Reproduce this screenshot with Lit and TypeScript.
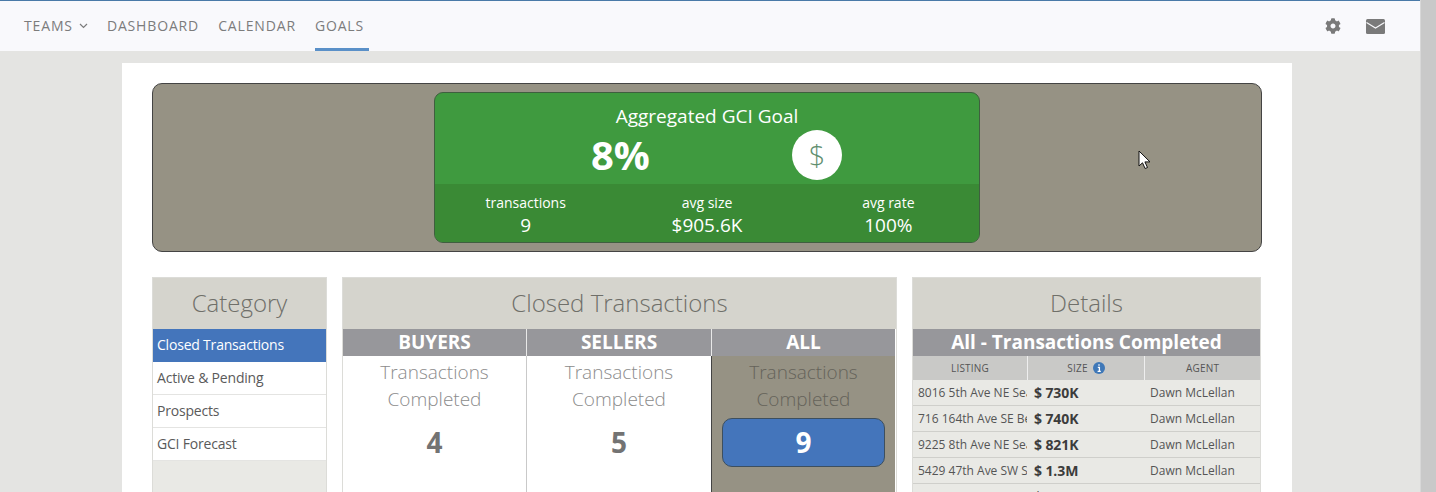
import { LitElement, html, css, svg } from "lit";
import { customElement } from "lit/decorators.js";

const rows = [
  ["8016 5th Ave NE Seattle", "$ 730K"],
  ["716 164th Ave SE Bellevue", "$ 740K"],
  ["9225 8th Ave NE Seattle", "$ 821K"],
  ["5429 47th Ave SW Seattle", "$ 1.3M"],
];

const gear = svg`<path d="M487.4 315.7l-42.6-24.6c4.3-23.2 4.3-47 0-70.2l42.6-24.6c4.9-2.8 7.1-8.6 5.5-14-11.1-35.6-30-67.8-54.7-94.6-3.8-4.1-10-5.1-14.8-2.3L380.8 110c-17.9-15.4-38.5-27.3-60.8-35.1V25.8c0-5.6-3.9-10.5-9.4-11.7-36.7-8.2-74.3-7.8-109.2 0-5.5 1.2-9.4 6.1-9.4 11.7V75c-22.2 7.9-42.8 19.8-60.8 35.1L88.7 85.5c-4.9-2.8-11-1.9-14.8 2.3-24.7 26.7-43.6 58.9-54.7 94.6-1.7 5.4.6 11.2 5.5 14L67.3 221c-4.3 23.2-4.3 47 0 70.2l-42.6 24.6c-4.9 2.8-7.1 8.6-5.5 14 11.1 35.6 30 67.8 54.7 94.6 3.8 4.1 10 5.1 14.8 2.3l42.6-24.6c17.9 15.4 38.5 27.3 60.8 35.1v49.2c0 5.6 3.9 10.5 9.4 11.7 36.7 8.2 74.3 7.8 109.2 0 5.5-1.2 9.4-6.1 9.4-11.7v-49.2c22.2-7.9 42.8-19.8 60.8-35.1l42.6 24.6c4.9 2.8 11 1.9 14.8-2.3 24.7-26.7 43.6-58.9 54.7-94.6 1.5-5.5-.7-11.3-5.6-14.1zM256 336c-44.1 0-80-35.9-80-80s35.9-80 80-80 80 35.9 80 80-35.9 80-80 80z"/>`;

@customElement("app-root")
export class AppRoot extends LitElement {
  static styles = css`
    :host { display: block; height: 492px; overflow: hidden; position: relative; font-family: "Open Sans", sans-serif; background: #e4e4e2; }
    .shell { display: flex; height: 492px; }
    .page { width: 1420px; flex: none; }
    .scrollbar { flex: 1; background: #c9c9c9; border-left: 1px solid #d8d8d8; }
    nav { height: 50px; border-top: 1px solid #4a7aa8; background: #f9f9fc; display: flex; padding-left: 24px; color: #7c7c7c; font-size: 14px; letter-spacing: 0.85px; }
    .item { display: flex; align-items: center; box-sizing: border-box; height: 50px; padding-top: 1px; margin-right: 19px; border-bottom: 3px solid transparent; white-space: nowrap; }
    .item.active { border-bottom-color: #5a90c8; padding-right: 5px; margin-right: 0; }
    .chev { margin-left: 6px; margin-top: 2px; }
    .nav-icons { margin-left: auto; display: flex; align-items: center; gap: 25px; padding-right: 35px; height: 50px; }
    .content { width: 1170px; height: 429px; margin: 12px 0 0 122px; background: #fff; padding: 20px 30px 0; box-sizing: border-box; }
    .hero { height: 169px; background: #969284; border: 1px solid #444; border-radius: 10px; box-sizing: border-box; display: flex; justify-content: center; padding-top: 8px; }
    .goal { width: 546px; height: 151px; box-sizing: border-box; background: #3f9a3f; border: 1px solid #3f5f3f; border-radius: 9px; color: #fff; overflow: hidden; display: flex; flex-direction: column; }
    .goal-title { font-size: 19px; line-height: 26px; text-align: center; margin-top: 10px; }
    .goal-main { display: flex; align-items: center; gap: 142px; padding-left: 156px; height: 54px; margin-top: -1px; }
    .pct { font-size: 40px; font-weight: 700; line-height: 50px; margin-top: -1px; }
    .coin { width: 50px; height: 50px; border-radius: 50%; background: #fff; color: #5f8f6f; font-size: 29px; font-weight: 300; line-height: 50px; text-align: center; }
    .stats { margin-top: 2px; height: 58px; background: #3a8a35; display: grid; grid-template-columns: repeat(3, 1fr); text-align: center; }
    .stat-l { font-size: 14px; line-height: 20px; margin-top: 9px; }
    .stat-v { font-size: 19px; line-height: 24px; margin-top: 0; }
    .cols { display: flex; gap: 15px; margin-top: 25px; align-items: stretch; height: 215px; }
    .col { box-sizing: border-box; border: 1px solid #dcdcd8; border-bottom: none; background: #e9e9e5; overflow: hidden; }
    .c1 { width: 175px; }
    .c2 { width: 555px; background: #fff; }
    .c3 { width: 349px; }
    .head { height: 51px; background: #d5d4cd; color: #6f6f69; font-size: 24px; font-weight: 300; line-height: 49px; text-align: center; }
    .cat { height: 33px; background: #fff; color: #5a5a5a; font-size: 14px; line-height: 32px; padding-left: 4px; border-bottom: 1px solid #e4e4e2; box-sizing: border-box; letter-spacing: -0.2px; }
    .cat.on { background: #4475bb; color: #fff; border-bottom: none; }
    .tabs { display: grid; grid-template-columns: 183px 185px 184px; }
    .tab { min-width: 0; }
    .tab-h { height: 27px; box-sizing: border-box; background: #97979b; color: #fff; font-size: 19px; font-weight: 700; line-height: 26px; text-align: center; border-left: 1px solid #e8e8e8; }
    .tab:first-child .tab-h { border-left: none; }
    .tab-b { height: 137px; box-sizing: border-box; border-left: 1px solid #c9c9c9; overflow: hidden; }
    .tab:first-child .tab-b { border-left: none; }
    .tab.dark .tab-b { background: #969284; border-left-color: #444; }
    .tab-t { color: #8c8c8c; font-size: 19px; font-weight: 300; line-height: 27px; text-align: center; margin-top: 3px; }
    .dark .tab-t { color: #65635a; }
    .num { height: 49px; margin: 5px 10px 0; box-sizing: border-box; border: 1px solid transparent; border-radius: 10px; color: #737373; font-size: 28px; font-weight: 700; line-height: 47px; text-align: center; }
    .dark .num { background: #4475bb; border-color: #3d4f5f; color: #fff; }
    .sub { height: 27px; background: #97979b; color: #fff; font-size: 19px; font-weight: 700; line-height: 26px; text-align: center; white-space: nowrap; }
    .grid { display: grid; grid-template-columns: 114px 117px 1fr; }
    .th { height: 24px; background: #c9c9c7; color: #555; font-size: 10px; line-height: 24px; text-align: center; border-left: 1px solid #eee; display: flex; align-items: center; justify-content: center; gap: 5px; box-sizing: border-box; letter-spacing: 0.2px; }
    .th:first-child { border-left: none; }
    .td { height: 26px; box-sizing: border-box; border-bottom: 1px solid #cfcfcb; font-size: 12px; line-height: 25px; color: #555; overflow: hidden; white-space: nowrap; padding-left: 5px; }
    .td.size { color: #3c3c3c; font-size: 14px; font-weight: 700; padding-left: 7px; letter-spacing: -0.1px; }
    .td.agent { padding-left: 6px; }
    .cursor { position: absolute; left: 1138px; top: 150px; }
  `;

  render() {
    return html`
      <div class="shell">
        <div class="page">
          <nav>
            <div class="item">TEAMS<svg class="chev" width="9" height="6" viewBox="0 0 9 6" fill="none" stroke="#7c7c7c" stroke-width="1.2"><path d="M1 1l3.5 3.5L8 1"/></svg></div>
            <div class="item">DASHBOARD</div>
            <div class="item">CALENDAR</div>
            <div class="item active">GOALS</div>
            <div class="nav-icons">
              <svg width="16" height="16" viewBox="0 0 512 512" fill="#7a7a7a">${gear}</svg>
              <svg width="19" height="15" viewBox="0 0 19 15"><rect width="19" height="15" rx="1.5" fill="#7a7a7a"/><path d="M0.5 3.5L9.5 9L18.5 3.5" fill="none" stroke="#f9f9fc" stroke-width="1.1"/></svg>
            </div>
          </nav>
          <div class="content">
            <div class="hero">
              <div class="goal">
                <div class="goal-title">Aggregated GCI Goal</div>
                <div class="goal-main"><div class="pct">8%</div><div class="coin">$</div></div>
                <div class="stats">
                  <div><div class="stat-l">transactions</div><div class="stat-v">9</div></div>
                  <div><div class="stat-l">avg size</div><div class="stat-v">$905.6K</div></div>
                  <div><div class="stat-l">avg rate</div><div class="stat-v">100%</div></div>
                </div>
              </div>
            </div>
            <div class="cols">
              <div class="col c1">
                <div class="head">Category</div>
                <div class="cat on">Closed Transactions</div>
                <div class="cat">Active &amp; Pending</div>
                <div class="cat">Prospects</div>
                <div class="cat">GCI Forecast</div>
              </div>
              <div class="col c2">
                <div class="head">Closed Transactions</div>
                <div class="tabs">
                  ${[["BUYERS","4"],["SELLERS","5"],["ALL","9"]].map(([h,n]) => html`
                    <div class="tab ${h === "ALL" ? "dark" : ""}">
                      <div class="tab-h">${h}</div>
                      <div class="tab-b">
                        <div class="tab-t">Transactions<br>Completed</div>
                        <div class="num">${n}</div>
                      </div>
                    </div>`)}
                </div>
              </div>
              <div class="col c3">
                <div class="head">Details</div>
                <div class="sub">All - Transactions Completed</div>
                <div class="grid">
                  <div class="th">LISTING</div>
                  <div class="th">SIZE <svg width="12" height="12" viewBox="0 0 12 12"><circle cx="6" cy="6" r="6" fill="#3f78b8"/><path d="M6 2.2v1.6M4.8 5.3H6.4V9M4.6 9.3h3.2" stroke="#fff" stroke-width="1.3" fill="none"/></svg></div>
                  <div class="th">AGENT</div>
                  ${rows.map(([a,s]) => html`<div class="td">${a}</div><div class="td size">${s}</div><div class="td agent">Dawn McLellan</div>`)}
                  <div class="td"></div><div class="td size">$</div><div class="td agent"></div>
                </div>
              </div>
            </div>
          </div>
        </div>
        <div class="scrollbar"></div>
      </div>
      <svg class="cursor" width="14" height="20" viewBox="0 0 14 20"><path d="M1 1v15l3.5-3.2 2.6 5.7 2.4-1-2.6-5.6H12z" fill="#fff" stroke="#111" stroke-width="1"/></svg>
    `;
  }
}
